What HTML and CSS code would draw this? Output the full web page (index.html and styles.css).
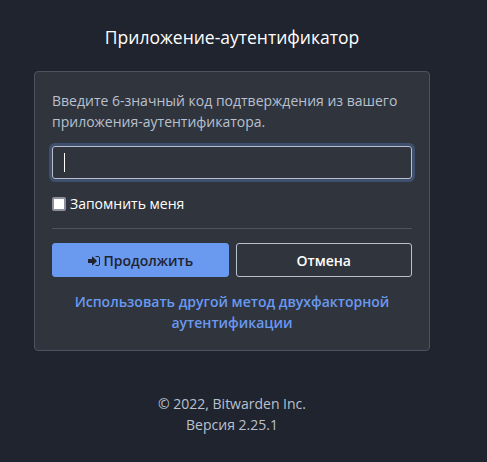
FILE: index.html
```html
<!DOCTYPE html>
<html lang="ru">
<head>
<meta charset="utf-8">
<title>Приложение-аутентификатор</title>
<link rel="stylesheet" href="styles.css">
</head>
<body>
<main class="page">
  <h1 class="title">Приложение-аутентификатор</h1>
  <form class="card">
    <p class="hint">Введите 6-значный код подтверждения из вашего приложения-аутентификатора.</p>
    <div class="field"><span class="caret"></span></div>
    <label class="remember"><span class="box"></span>Запомнить меня</label>
    <hr class="rule">
    <div class="actions">
      <button type="button" class="btn primary"><svg class="icon" viewBox="0 0 12 10"><path fill="currentColor" d="M.5 3H4V1.200Q4 .2 4.700.8L8.600 4.600Q9 5 8.600 5.400L4.700 9.200Q4 9.800 4 8.800V7H.5Q0 7 0 6.500v-3Q0 3 .5 3z"/><path fill="none" stroke="currentColor" d="M7.500.5H10q1.500 0 1.500 1.500v6Q11.500 9.500 10 9.500H7.500"/></svg>Продолжить</button>
      <button type="button" class="btn">Отмена</button>
    </div>
    <a class="link">Использовать другой метод двухфакторной аутентификации</a>
  </form>
  <footer class="footer">© 2022, Bitwarden Inc.<br>Версия 2.25.1</footer>
</main>
</body>
</html>
```
FILE: styles.css
```css
* { box-sizing: border-box; }
body { margin: 0; background: #1f242e; color: #fff; font: 14px/21px "Open Sans", sans-serif; }
.page { width: 396px; margin-left: 34px; padding-top: 26px; }
.title { margin: 0 0 22px; font-size: 17.5px; line-height: 23px; font-weight: 400; text-align: center; }
.card { height: 280px; padding: 18px 17px; background: #2f343d; border: 1px solid #4c525f; border-radius: 4px; }
.hint { margin: 0 0 14px; color: #bac0ce; }
.field { height: 33px; padding: 6px 11px; border: 1px solid #bac0ce; border-radius: 3px; box-shadow: 0 0 0 3px #3f4f6e; }
.caret { display: block; width: 1px; height: 19px; background: #fff; }
.remember { display: flex; align-items: center; gap: 4px; margin-top: 14px; }
.box { width: 14px; height: 14px; background: #fff; border: 2px solid #8f8f9d; border-radius: 2px; }
.rule { height: 1px; margin: 14px 0; border: 0; background: #4c525f; }
.actions { display: flex; gap: 7px; }
.btn { display: flex; align-items: center; justify-content: center; flex: 1; height: 34px; padding: 0; border: 1px solid #bac0ce; border-radius: 3px; background: transparent; color: #fff; font: 600 14px/21px "Open Sans", sans-serif; }
.primary { background: #6a99f0; border-color: #6a99f0; color: #1f242e; }
.icon { width: 12px; height: 10px; margin: 1px 3px 0 1px; }
.link { display: block; margin-top: 14px; color: #6a99f0; font-weight: 600; text-align: center; }
.footer { margin-top: 42px; color: #bac0ce; text-align: center; }
```
